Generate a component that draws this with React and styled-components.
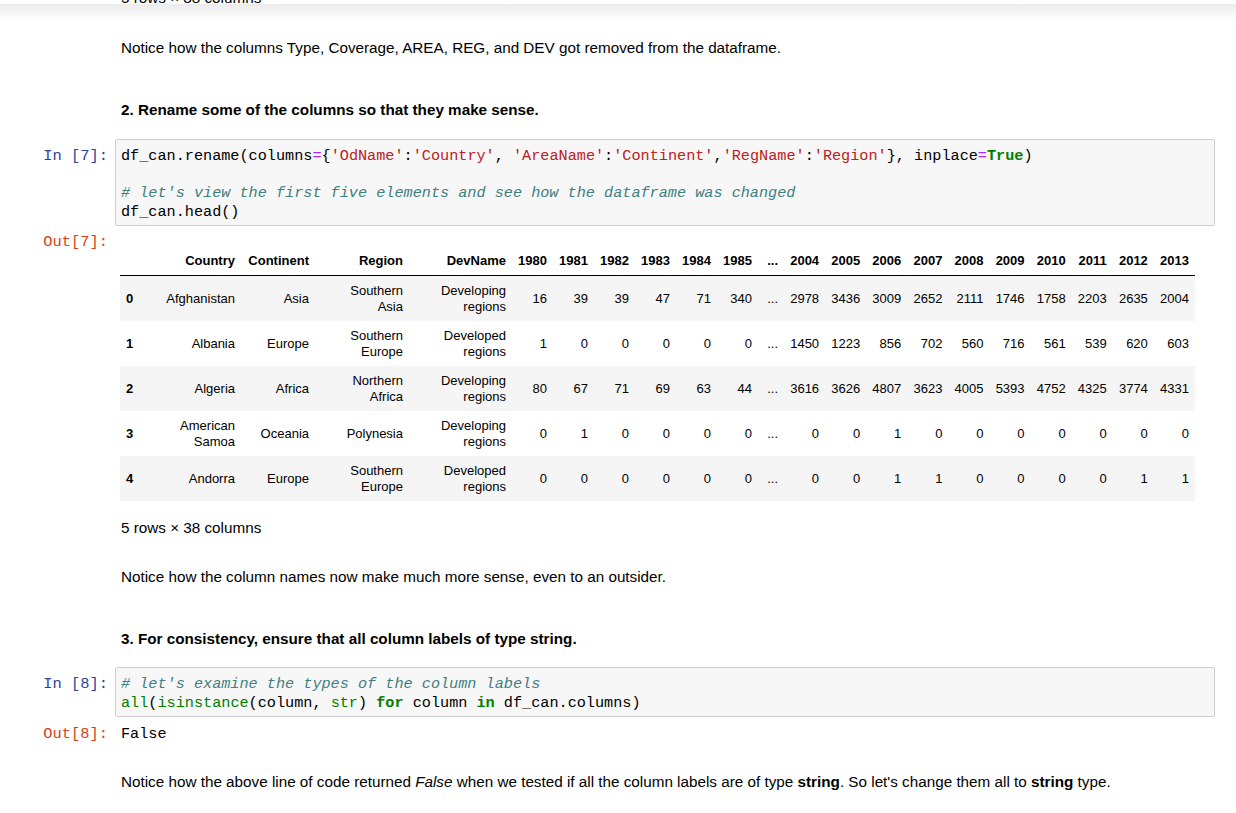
import React from 'react';
import styled, { createGlobalStyle } from 'styled-components';

const Global = createGlobalStyle`
  html, body {
    margin: 0;
    padding: 0;
    background: #fff;
  }
  body {
    font-family: "Liberation Sans", Arial, sans-serif;
    font-size: 15.25px;
    color: #000;
    overflow: hidden;
  }
`;

const Page = styled.div`
  width: 1236px;
  height: 813px;
  overflow: hidden;
`;

const TopBar = styled.div`
  height: 20px;
  overflow: hidden;
  padding-left: 121px;
  background: linear-gradient(to bottom, #ffffff 0, #ffffff 4px, #ebebeb 4px, #ffffff 20px);
`;

const Clipped = styled.div`
  margin-top: -13px;
  line-height: 22px;
`;

const Cell = styled.div`
  display: flex;
  margin-top: ${p => p.$top}px;
  padding-right: 21px;
`;

const Prompt = styled.div`
  width: 115px;
  flex: none;
  box-sizing: border-box;
  padding-right: 7px;
  text-align: right;
  font-family: "Liberation Mono", "Courier New", monospace;
  font-size: 15.4px;
  line-height: 18.5px;
  color: ${p => (p.$out ? '#D84315' : '#303F9F')};
  padding-top: ${p => (p.$out ? 0 : 8)}px;
`;

const Body = styled.div`
  flex: 1;
  min-width: 0;
`;

const Text = styled.p`
  margin: 0;
  padding-left: 6px;
  line-height: 22px;
  font-weight: ${p => (p.$bold ? 'bold' : 'normal')};
`;

const CodeBox = styled.pre`
  margin: 0;
  background: #f7f7f7;
  border: 1px solid #cfcfcf;
  border-radius: 2px;
  padding: 7px 5px 4px 5px;
  font-family: "Liberation Mono", "Courier New", monospace;
  font-size: 15.2px;
  line-height: 18.5px;
  white-space: pre;
  overflow: hidden;
`;

const Tok = styled.span`
  color: ${p => ({ str: '#BA2121', op: '#AA22FF', kw: '#008000', bi: '#008000', cm: '#408080' }[p.$k] || '#000')};
  font-weight: ${p => (p.$k === 'kw' ? 'bold' : 'normal')};
  font-style: ${p => (p.$k === 'cm' ? 'italic' : 'normal')};
`;

const OutText = styled.pre`
  margin: 0;
  padding-left: 6px;
  font-family: "Liberation Mono", "Courier New", monospace;
  font-size: 15.2px;
  line-height: 18.5px;
`;

const Table = styled.table`
  margin: 13px 0 0 5px;
  width: 1075px;
  table-layout: fixed;
  border-collapse: collapse;
  border-spacing: 0;
  font-family: "Liberation Sans", Arial, sans-serif;
  font-size: 13px;
  color: #000;
`;

const HeadRow = styled.tr`
  border-bottom: 1px solid #000;
`;

const Row = styled.tr`
  background: ${p => (p.$odd ? '#fff' : '#f5f5f5')};
`;

const Th = styled.th`
  text-align: right;
  vertical-align: middle;
  padding: 6.5px 6px;
  line-height: 16px;
  font-weight: bold;
  white-space: normal;
`;

const Td = styled.td`
  text-align: right;
  vertical-align: middle;
  padding: 6.5px 6px 6.5px ${p => (p.$tight ? 10 : 6)}px;
  line-height: 16px;
  white-space: normal;
`;

const Caption = styled.p`
  margin: 16px 0 0 0;
  padding-left: 6px;
  line-height: 22px;
`;

const widths = [19, 102, 74, 94, 103, 41, 41, 41, 41, 41, 41, 26, 41.1, 41.1, 41.1, 41.1, 41.1, 41.1, 41.1, 41.1, 41.1, 41.1];

const headers = ['', 'Country', 'Continent', 'Region', 'DevName', '1980', '1981', '1982', '1983', '1984', '1985', '...',
  '2004', '2005', '2006', '2007', '2008', '2009', '2010', '2011', '2012', '2013'];

const rows = [
  ['0', 'Afghanistan', 'Asia', 'Southern Asia', 'Developing regions', 16, 39, 39, 47, 71, 340, '...', 2978, 3436, 3009, 2652, 2111, 1746, 1758, 2203, 2635, 2004],
  ['1', 'Albania', 'Europe', 'Southern Europe', 'Developed regions', 1, 0, 0, 0, 0, 0, '...', 1450, 1223, 856, 702, 560, 716, 561, 539, 620, 603],
  ['2', 'Algeria', 'Africa', 'Northern Africa', 'Developing regions', 80, 67, 71, 69, 63, 44, '...', 3616, 3626, 4807, 3623, 4005, 5393, 4752, 4325, 3774, 4331],
  ['3', 'American Samoa', 'Oceania', 'Polynesia', 'Developing regions', 0, 1, 0, 0, 0, 0, '...', 0, 0, 1, 0, 0, 0, 0, 0, 0, 0],
  ['4', 'Andorra', 'Europe', 'Southern Europe', 'Developed regions', 0, 0, 0, 0, 0, 0, '...', 0, 0, 1, 1, 0, 0, 0, 0, 1, 1],
];

function DataFrame() {
  return (
    <Table>
      <colgroup>
        {widths.map((w, i) => <col key={i} style={{ width: w }} />)}
      </colgroup>
      <thead>
        <HeadRow>
          {headers.map((h, i) => <Th key={i}>{h}</Th>)}
        </HeadRow>
      </thead>
      <tbody>
        {rows.map((r, ri) => (
          <Row key={ri} $odd={ri % 2 === 1}>
            <Th>{r[0]}</Th>
            {r.slice(1).map((c, ci) => <Td key={ci} $tight={ci === 2}>{c}</Td>)}
          </Row>
        ))}
      </tbody>
    </Table>
  );
}

export default function App() {
  return (
    <Page>
      <Global />
      <TopBar>
        <Clipped>5 rows × 38 columns</Clipped>
      </TopBar>

      <Cell $top={17}>
        <Prompt as="div" />
        <Body>
          <Text>Notice how the columns Type, Coverage, AREA, REG, and DEV got removed from the dataframe.</Text>
        </Body>
      </Cell>

      <Cell $top={40}>
        <Prompt as="div" />
        <Body>
          <Text $bold>2. Rename some of the columns so that they make sense.</Text>
        </Body>
      </Cell>

      <Cell $top={18}>
        <Prompt>In [7]:</Prompt>
        <Body>
          <CodeBox>
            df_can.rename(columns<Tok $k="op">=</Tok>{'{'}<Tok $k="str">'OdName'</Tok>:<Tok $k="str">'Country'</Tok>, <Tok $k="str">'AreaName'</Tok>:<Tok $k="str">'Continent'</Tok>,<Tok $k="str">'RegName'</Tok>:<Tok $k="str">'Region'</Tok>{'}'}, inplace<Tok $k="op">=</Tok><Tok $k="kw">True</Tok>){'\n'}
            {'\n'}
            <Tok $k="cm"># let's view the first five elements and see how the dataframe was changed</Tok>{'\n'}
            df_can.head()
          </CodeBox>
        </Body>
      </Cell>

      <Cell $top={7}>
        <Prompt $out>Out[7]:</Prompt>
        <Body>
          <DataFrame />
          <Caption>5 rows × 38 columns</Caption>
        </Body>
      </Cell>

      <Cell $top={27}>
        <Prompt as="div" />
        <Body>
          <Text>Notice how the column names now make much more sense, even to an outsider.</Text>
        </Body>
      </Cell>

      <Cell $top={40}>
        <Prompt as="div" />
        <Body>
          <Text $bold>3. For consistency, ensure that all column labels of type string.</Text>
        </Body>
      </Cell>

      <Cell $top={17}>
        <Prompt>In [8]:</Prompt>
        <Body>
          <CodeBox>
            <Tok $k="cm"># let's examine the types of the column labels</Tok>{'\n'}
            <Tok $k="bi">all</Tok>(<Tok $k="bi">isinstance</Tok>(column, <Tok $k="bi">str</Tok>) <Tok $k="kw">for</Tok> column <Tok $k="kw">in</Tok> df_can.columns)
          </CodeBox>
        </Body>
      </Cell>

      <Cell $top={8}>
        <Prompt $out>Out[8]:</Prompt>
        <Body>
          <OutText>False</OutText>
        </Body>
      </Cell>

      <Cell $top={27}>
        <Prompt as="div" />
        <Body>
          <Text>
            Notice how the above line of code returned <i>False</i> when we tested if all the column labels are of type <b>string</b>. So let's change them all to <b>string</b> type.
          </Text>
        </Body>
      </Cell>
    </Page>
  );
}
